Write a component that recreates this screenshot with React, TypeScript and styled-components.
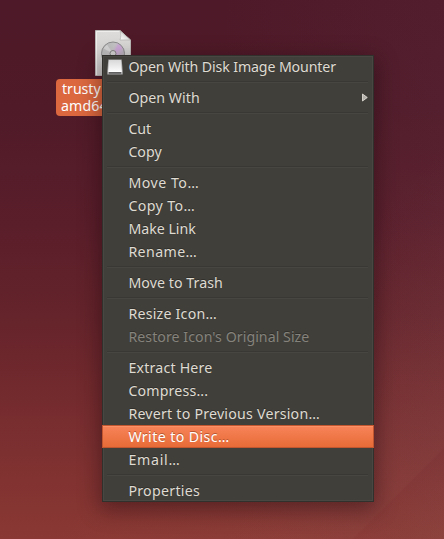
import React from "react";
import styled, { createGlobalStyle, css } from "styled-components";

const GlobalStyle = createGlobalStyle`
  html, body { margin: 0; height: 100%; overflow: hidden; }
  body { font-family: "Noto Sans", "Open Sans", sans-serif; }
`;

const Desktop = styled.main`
  position: relative;
  width: 444px;
  height: 539px;
  overflow: hidden;
  background:
    linear-gradient(135deg, rgba(160, 100, 85, 0) 60%, rgba(160, 100, 85, 0.16) 90.6%, rgba(160, 100, 85, 0.08) 90.9%, rgba(160, 110, 85, 0.16) 100%),
    linear-gradient(to right, rgba(120, 75, 100, 0) 50%, rgba(120, 75, 100, 0.1)),
    linear-gradient(to bottom, #4e1928 0%, #501a28 20%, #5a1e2a 42%, #66242b 60%, #782d2f 78%, #8a3833 100%);
`;

const DesktopFile = styled.div`
  position: absolute;
  left: 56px;
  top: 30px;
  width: 114px;
  display: flex;
  flex-direction: column;
  align-items: center;
  gap: 3px;
`;

const FileLabel = styled.div`
  box-sizing: border-box;
  width: 114px;
  height: 37px;
  padding: 1px 5px;
  border-radius: 4px;
  background: #db683f;
  color: #fff;
  font-size: 14.2px;
  line-height: 17px;
  white-space: nowrap;
  overflow: hidden;
`;

const LabelLine = styled.div<{ $indent: number; $spacing: number }>`
  padding-left: ${(p) => p.$indent}px;
  letter-spacing: ${(p) => p.$spacing}px;
`;

const Menu = styled.div`
  position: absolute;
  left: 102px;
  top: 55px;
  width: 272px;
  background: #403f3a;
  box-shadow: 0 6px 20px 2px rgba(20, 5, 10, 0.4);

  &::after {
    content: "";
    position: absolute;
    inset: 0;
    border: 1px solid #31302c;
    box-shadow: inset 0 0 0 1px #484741;
    pointer-events: none;
  }
`;

const Item = styled.div<{ $state?: "active" | "disabled" }>`
  box-sizing: border-box;
  position: relative;
  display: grid;
  grid-template-columns: 21px 1fr 7px;
  align-items: center;
  height: 23px;
  padding: 0 6px 0 5px;
  color: #dfdbd2;
  font-size: 14.2px;
  line-height: 23px;
  text-shadow: 0 -1px 0 #302f2b;
  white-space: nowrap;

  ${(p) =>
    p.$state === "disabled" &&
    css`
      color: #85837c;
    `}
  ${(p) =>
    p.$state === "active" &&
    css`
      z-index: 1;
      color: #fff;
      background: linear-gradient(#f9855a, #e66a36);
      box-shadow: inset 0 0 0 1px #c1562f, inset 0 2px 0 #fb9167;
      text-shadow: 0 -1px 0 #b75631;
    `}
`;

const Label = styled.span<{ $spacing: number }>`
  padding-left: 0.4px;
  letter-spacing: ${(p) => p.$spacing}px;
`;

const Separator = styled.div`
  box-sizing: border-box;
  height: 8px;
  padding: 3px 6px 0 5px;

  &::before {
    content: "";
    display: block;
    height: 1px;
    background: #393834;
    border-bottom: 1px solid #474640;
  }
`;

const FileIcon = () => (
  <svg width="38" height="46" viewBox="0 0 38 46">
    <defs>
      <linearGradient id="paper" x1="0" y1="0" x2="0" y2="1">
        <stop offset="0" stopColor="#dddcdb" />
        <stop offset="1" stopColor="#cfcecd" />
      </linearGradient>
      <linearGradient id="disc" x1="0" y1="0" x2="1" y2="0.5">
        <stop offset="0" stopColor="#b5b5b6" />
        <stop offset="0.5" stopColor="#c6c5c6" />
        <stop offset="0.72" stopColor="#cfb0d8" />
        <stop offset="1" stopColor="#b9b9ba" />
      </linearGradient>
      <linearGradient id="fold" x1="0" y1="1" x2="1" y2="0">
        <stop offset="0" stopColor="#fff" />
        <stop offset="1" stopColor="#bdbcbb" />
      </linearGradient>
    </defs>
    <path d="M1.500 .5H26L36.500 10V45.500H1.500Z" fill="url(#paper)" stroke="#b9b7b5" />
    <path d="M2.500 45V1.500H26" fill="none" stroke="#efeeed" />
    <path d="M26 .8L36.500 10H26C27 7 27 4 26 .8Z" fill="url(#fold)" stroke="#b3b1af" strokeWidth=".7" />
    <circle cx="19" cy="23.500" r="11.500" fill="url(#disc)" stroke="#8e8d8d" />
    <path d="M19 23.500L24 14A10.500 10.500 0 0 1 28.500 18.500Z" fill="#cda3da" opacity=".6" />
    <path d="M19 23.500L9.500 18.500A10.500 10.500 0 0 1 13 14.800Z" fill="#eee" opacity=".5" />
    <circle cx="19" cy="23.500" r="3" fill="#d8d7d8" stroke="#858485" />
  </svg>
);

const DriveIcon = () => (
  <svg width="16" height="16" viewBox="0 0 16 16">
    <defs>
      <linearGradient id="drive" x1="0" y1="0" x2="0" y2="1">
        <stop offset="0" stopColor="#d8d8d8" />
        <stop offset="1" stopColor="#fafafa" />
      </linearGradient>
    </defs>
    <path d="M1.300 .5H14.700L15.700 12V15.500H.3V12Z" fill="#a9a9a9" />
    <path d="M2 1H14L14.800 12H1.200Z" fill="url(#drive)" />
    <rect x="1.200" y="12" width="13.600" height="1" fill="#fff" />
    <rect x="2" y="13.300" width="12" height="1.200" fill="#424242" />
  </svg>
);

const SubmenuArrow = () => (
  <svg width="7" height="9" viewBox="0 0 7 9">
    <path d="M1.500 1L6.300 4.500L1.500 8Z" fill="#b5b2ab" stroke="#e8e5de" strokeWidth=".8" />
  </svg>
);

type Entry = {
  text: string;
  spacing: number;
  state?: "active" | "disabled";
  icon?: boolean;
  submenu?: boolean;
};

const groups: Entry[][] = [
  [{ text: "Open With Disk Image Mounter", spacing: -0.13, icon: true }],
  [{ text: "Open With", spacing: 0.032, submenu: true }],
  [
    { text: "Cut", spacing: -0.117 },
    { text: "Copy", spacing: 0.003 },
  ],
  [
    { text: "Move To…", spacing: 0.5 },
    { text: "Copy To…", spacing: 0.4 },
    { text: "Make Link", spacing: -0.02 },
    { text: "Rename…", spacing: 0.4 },
  ],
  [{ text: "Move to Trash", spacing: 0.06 }],
  [
    { text: "Resize Icon…", spacing: 0.22 },
    { text: "Restore Icon's Original Size", spacing: 0.04, state: "disabled" },
  ],
  [
    { text: "Extract Here", spacing: 0.2 },
    { text: "Compress...", spacing: 0.16 },
    { text: "Revert to Previous Version…", spacing: 0.22 },
    { text: "Write to Disc…", spacing: 0.392, state: "active" },
    { text: "Email…", spacing: 0.72 },
  ],
  [{ text: "Properties", spacing: 0.28 }],
];

export default function App() {
  return (
    <>
      <GlobalStyle />
      <Desktop>
        <DesktopFile>
          <FileIcon />
          <FileLabel>
            <LabelLine $indent={1} $spacing={-0.05}>trusty</LabelLine>
            <LabelLine $indent={0} $spacing={0.1}>amd64</LabelLine>
          </FileLabel>
        </DesktopFile>
        <Menu role="menu">
          {groups.map((group, i) => (
            <React.Fragment key={i}>
              {i > 0 && <Separator role="separator" />}
              {group.map((entry) => (
                <Item key={entry.text} role="menuitem" $state={entry.state}>
                  {entry.icon ? <DriveIcon /> : <span />}
                  <Label $spacing={entry.spacing}>{entry.text}</Label>
                  {entry.submenu && <SubmenuArrow />}
                </Item>
              ))}
            </React.Fragment>
          ))}
        </Menu>
      </Desktop>
    </>
  );
}
